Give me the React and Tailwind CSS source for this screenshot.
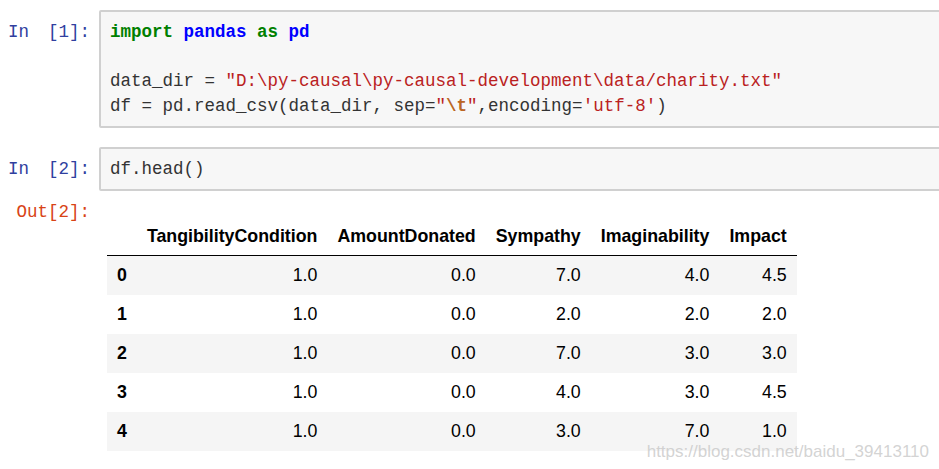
import React from 'react';

const mono = { fontFamily: '"Liberation Mono", "DejaVu Sans Mono", monospace' };

// prompt column shared by input and output cells
function Prompt({ kind, n }) {
  if (kind === 'out') {
    return (
      <div className="w-[100px] shrink-0 pr-[10px] text-right text-[#d84315]">
        Out[{n}]:
      </div>
    );
  }
  return (
    <div className="w-[99px] shrink-0 pl-[8px] pt-[10px] flex text-[#303f9f]">
      <span>In</span>
      <span className="ml-[19px]">[{n}]:</span>
    </div>
  );
}

function InputCell({ n, children }) {
  return (
    <div className="flex">
      <Prompt kind="in" n={n} />
      <div className="w-[860px] shrink-0 rounded-[2px] border-2 border-[#d0d0d0] bg-[#f7f7f7] pl-[9px] pt-[8px] pb-[7px] text-[#333] whitespace-pre">
        {children}
      </div>
    </div>
  );
}

const rows = [
  [0, '1.0', '0.0', '7.0', '4.0', '4.5'],
  [1, '1.0', '0.0', '2.0', '2.0', '2.0'],
  [2, '1.0', '0.0', '7.0', '3.0', '3.0'],
  [3, '1.0', '0.0', '4.0', '3.0', '4.5'],
  [4, '1.0', '0.0', '3.0', '7.0', '1.0'],
];

const headers = ['TangibilityCondition', 'AmountDonated', 'Sympathy', 'Imaginability', 'Impact'];

export default function App() {
  return (
    <div className="relative w-[939px] h-[469px] overflow-hidden bg-white">
      <div className="flex flex-col pt-[10px] text-[17.5px] leading-[24.7px]" style={mono}>
        <InputCell n={1}>
          <div>
            <span className="text-[#008000] font-bold">import</span>{' '}
            <span className="text-[#0000ff] font-bold">pandas</span>{' '}
            <span className="text-[#008000] font-bold">as</span>{' '}
            <span className="text-[#0000ff] font-bold">pd</span>
          </div>
          <div>{' '}</div>
          <div>
            data_dir = <span className="text-[#ba2121]">{'"D:\\py-causal\\py-causal-development\\data/charity.txt"'}</span>
          </div>
          <div>
            df = pd.read_csv(data_dir, sep=<span className="text-[#ba2121]">"</span>
            <span className="text-[#bb6622] font-bold">\t</span>
            <span className="text-[#ba2121]">"</span>,encoding=<span className="text-[#ba2121]">'utf-8'</span>)
          </div>
        </InputCell>

        <div className="mt-[19px]">
          <InputCell n={2}>
            <div>df.head()</div>
          </InputCell>
        </div>

        <div className="mt-[9px] flex">
          <Prompt kind="out" n={2} />
          <div className="pl-[7px] pt-[17px]">
            <table
              className="border-collapse text-[17.8px] text-black"
              style={{ fontFamily: '"Liberation Sans", Arial, sans-serif' }}
            >
              <thead>
                <tr className="h-[39px] border-b border-black">
                  <th className="px-[10px]"></th>
                  {headers.map((h) => (
                    <th key={h} className="px-[10px] text-right font-bold leading-[20px]">
                      {h}
                    </th>
                  ))}
                </tr>
              </thead>
              <tbody>
                {rows.map((r, i) => (
                  <tr key={r[0]} className={i % 2 === 0 ? 'h-[39px] bg-[#f5f5f5]' : 'h-[39px] bg-white'}>
                    <th className="px-[10px] text-left font-bold leading-[20px]">{r[0]}</th>
                    {r.slice(1).map((v, j) => (
                      <td key={j} className="px-[10px] text-right leading-[20px]">
                        {v}
                      </td>
                    ))}
                  </tr>
                ))}
              </tbody>
            </table>
          </div>
        </div>
      </div>

      <div
        className="absolute right-[10px] top-[441px] text-[17px] leading-[22px] text-[#c8c8c8]/80"
        style={{ fontFamily: '"Liberation Sans", Arial, sans-serif' }}
      >
        https://blog.csdn.net/baidu_39413110
      </div>
    </div>
  );
}
